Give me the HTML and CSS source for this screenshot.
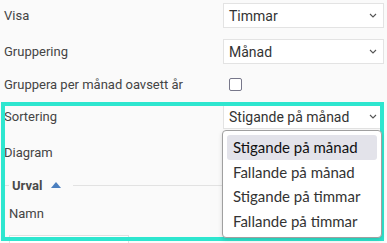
FILE: index.html
```html
<!DOCTYPE html>
<html lang="sv">
<head>
    <meta charset="UTF-8">
    <meta name="viewport" content="width=device-width, initial-scale=1.0">
    <title>Inställningar</title>
    <link rel="stylesheet" href="styles.css">
</head>
<body>
    <div class="page">
        <div class="form">
            <label class="label">Visa</label>
            <div class="select">Timmar
                <svg class="chev" viewBox="0 0 8 5"><path d="M1 1l3 3 3-3" fill="none" stroke="#555" stroke-width="1.1"/></svg>
            </div>

            <label class="label">Gruppering</label>
            <div class="select">Månad
                <svg class="chev" viewBox="0 0 8 5"><path d="M1 1l3 3 3-3" fill="none" stroke="#555" stroke-width="1.1"/></svg>
            </div>

            <label class="label">Gruppera per månad oavsett år</label>
            <div class="check-cell"><span class="checkbox"></span></div>

            <label class="label">Sortering</label>
            <div class="select">Stigande på månad
                <svg class="chev" viewBox="0 0 8 5"><path d="M1 1l3 3 3-3" fill="none" stroke="#555" stroke-width="1.1"/></svg>
            </div>

            <label class="label">Diagram</label>
            <div class="select"></div>
        </div>

        <fieldset class="urval">
            <legend>Urval <span class="caret"></span></legend>
            <div class="field-label">Namn</div>
            <div class="input"></div>
        </fieldset>

        <!-- markering runt sorteringen -->
        <div class="highlight"></div>

        <!-- öppen lista för Sortering -->
        <ul class="dropdown">
            <li class="active">Stigande på månad</li>
            <li>Fallande på månad</li>
            <li>Stigande på timmar</li>
            <li>Fallande på timmar</li>
        </ul>
    </div>
</body>
</html>
```

FILE: styles.css
```css
body {
    margin: 0;
    background-color: #fafafa;
    font-family: Roboto, "Liberation Sans", sans-serif;
    color: #444;
    overflow: hidden;
}
.page {
    position: relative;
    width: 387px;
    height: 243px;
    padding: 3px 3px 0 4px;
    box-sizing: border-box;
    overflow: hidden;
}
.form {
    display: grid;
    grid-template-columns: 219px 161px;
    grid-template-rows: 25px 25px 18px 25px 25px;
    row-gap: 11px;
}
.label {
    display: flex;
    align-items: center;
    font-size: 13px;
    color: #444;
}
.select {
    display: flex;
    align-items: center;
    justify-content: space-between;
    padding: 0 6px 0 5px;
    background-color: white;
    border: 1px solid #e3e3e3;
    font-size: 14px;
    color: #333;
}
.chev {
    width: 8px;
    height: 5px;
}
.check-cell {
    display: flex;
    align-items: center;
    padding-left: 6px;
}
.checkbox {
    width: 11px;
    height: 11px;
    border: 1px solid #77778a;
    border-radius: 2px;
    background-color: white;
}
.urval {
    margin: 13px 0 0 1px;
    padding: 0 4px;
    border: none;
    border-top: 1px solid #e2e2e2;
}
.urval legend {
    padding: 0 12px 0 3px;
    font-size: 13px;
    font-weight: bold;
    color: #4a4a4a;
}
.caret {
    display: inline-block;
    margin-left: 5px;
    width: 0;
    height: 0;
    border-left: 5px solid transparent;
    border-right: 5px solid transparent;
    border-bottom: 6px solid #4b7fbf;
    vertical-align: 2px;
}
.field-label {
    margin-top: 13px;
    font-size: 13px;
}
.input {
    margin-top: 14px;
    width: 118px;
    height: 24px;
    background-color: white;
    border: 1px solid #e0e0e0;
}
.highlight {
    position: absolute;
    left: 1px;
    top: 102px;
    width: 375px;
    height: 131px;
    border: 4px solid #2ee6cf;
}
.dropdown {
    position: absolute;
    left: 222px;
    top: 130px;
    width: 150px;
    margin: 0;
    padding: 4px;
    list-style: none;
    background-color: white;
    border: 1px solid #a0a0a0;
    border-radius: 4px;
    box-shadow: 0 2px 4px rgba(0, 0, 0, 0.15);
}
.dropdown li {
    height: 24.5px;
    line-height: 24.5px;
    padding-left: 6px;
    font-family: Lato, "Liberation Sans", sans-serif;
    font-size: 15px;
    color: #333;
}
.dropdown li.active {
    background-color: #e3e3ea;
    border-radius: 3px;
    color: #111;
}
```
